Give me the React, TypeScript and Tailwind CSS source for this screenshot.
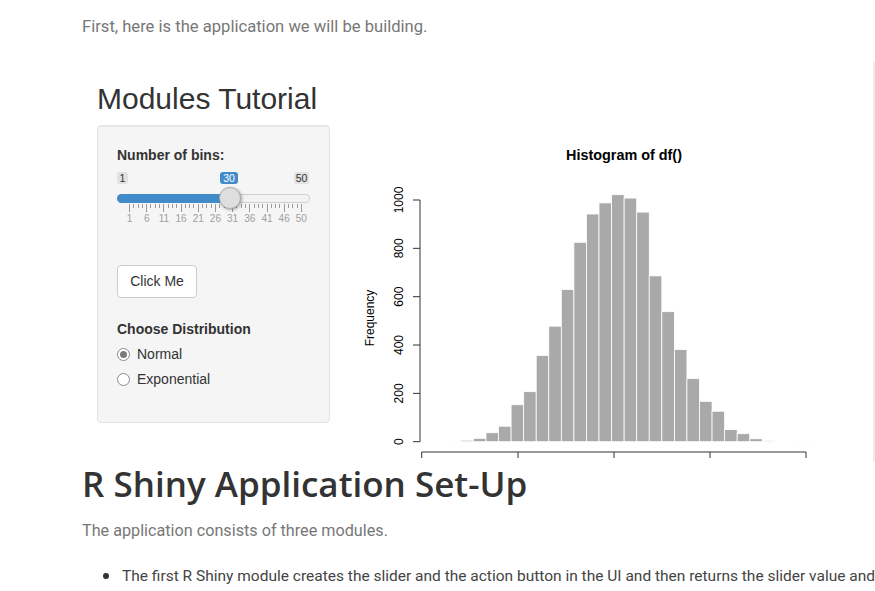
import React from "react";

const counts = [2, 6, 14, 37, 64, 153, 207, 357, 478, 630, 825, 942, 988, 1022, 1008, 950, 686, 538, 381, 261, 167, 126, 50, 33, 12, 4, 0, 1, 1];
const Y0 = 441.7;
const SY = 0.2417;

function Histogram() {
  const yTicks = [0, 200, 400, 600, 800, 1000];
  const xTicks = [421.7, 518, 614, 710, 806];
  return (
    <svg width="528" height="337" viewBox="345 125 528 337" className="ml-[15px] shrink-0" style={{ fontFamily: "'Liberation Sans', Arial, sans-serif" }}>
      <text x="624" y="160" textAnchor="middle" fontSize="14.4" fontWeight="bold" fill="#000">Histogram of df()</text>
      {counts.map((c, i) => {
        const h = Math.max(c * SY, c > 0 ? 0.8 : 0);
        return (
          <rect key={i} x={448.3 + i * 12.56} y={Y0 - h} width={12.56} height={h} fill={c < 3 ? "#d6d6d6" : "#a9a9a9"} stroke="#ffffff" strokeWidth="0.8" />
        );
      })}
      <line x1="420" y1="200" x2="420" y2={Y0} stroke="#333" strokeWidth="1" />
      {yTicks.map((t) => {
        const y = Y0 - t * SY;
        return (
          <g key={t}>
            <line x1="413" y1={y} x2="420" y2={y} stroke="#333" strokeWidth="1" />
            <text x="399" y={y} transform={`rotate(-90 399 ${y})`} textAnchor="middle" dominantBaseline="central" fontSize="12" fill="#000">{t}</text>
          </g>
        );
      })}
      <text x="370" y="318" transform="rotate(-90 370 318)" textAnchor="middle" dominantBaseline="central" fontSize="12" fill="#000">Frequency</text>
      <line x1="421.7" y1="452" x2="806" y2="452" stroke="#333" strokeWidth="1" />
      {xTicks.map((x) => (
        <line key={x} x1={x} y1="452" x2={x} y2="458" stroke="#333" strokeWidth="1" />
      ))}
    </svg>
  );
}

function Slider() {
  const majors = [1, 6, 11, 16, 21, 26, 31, 36, 41, 46, 50];
  return (
    <div className="mt-[5px] h-[60px] pt-[2px]" style={{ fontFamily: "'Liberation Sans', Arial, sans-serif" }}>
      <div className="relative flex justify-between h-[12px] text-[10.5px] leading-[12px] text-[#333]">
        <span className="w-[11px] rounded-[3px] bg-[#e1e1e1] text-center">1</span>
        <span className="w-[15px] mr-px rounded-[3px] bg-[#e1e1e1] text-center">50</span>
        <span className="absolute left-[103px] top-0 w-[18px] h-[12px] rounded-[3px] bg-[#428bca] text-center text-white">30</span>
      </div>
      <div className="relative mt-[10px] flex h-[9px]">
        <div className="w-[113px] rounded-l-full bg-[#428bca]" />
        <div className="flex-1 rounded-r-full bg-[#f2f2f2] border border-[#cfcfcf] border-l-0" />
        <div className="absolute left-[102px] -top-[7px] w-[22px] h-[22px] rounded-full bg-[#dedede] border border-[#ababab] shadow-[1px_1px_3px_rgba(0,0,0,0.3)]" />
      </div>
      <div className="mt-[1px] flex pl-[12px] h-[8px] items-start">
        {Array.from({ length: 10 }).map((_, k) => (
          <div key={k} className="flex w-[17.2px] shrink-0 items-start">
            <div className="w-[4.3px] h-[8px] border-l border-[#999] shrink-0" />
            <div className="w-[4.3px] h-[4px] border-l border-[#999] shrink-0" />
            <div className="w-[4.3px] h-[4px] border-l border-[#999] shrink-0" />
            <div className="w-[4.3px] h-[4px] border-l border-[#999] shrink-0" />
          </div>
        ))}
        <div className="w-px h-[8px] bg-[#999] shrink-0" />
      </div>
      <div className="mt-[1px] ml-[3.9px] flex text-[10px] leading-[12px] text-[#a0a0a0]">
        {majors.map((v) => (
          <span key={v} className="w-[17.2px] shrink-0 text-center">{v}</span>
        ))}
      </div>
    </div>
  );
}

function Radio({ checked, label }: { checked?: boolean; label: string }) {
  return (
    <div className="flex items-center h-[20px] mt-[5px]">
      <div className="w-[13px] h-[13px] rounded-full border border-[#8a8a8a] bg-white flex items-center justify-center">
        {checked && <div className="w-[7px] h-[7px] rounded-full bg-[#7a7a7a]" />}
      </div>
      <span className="ml-[7px] text-[14px] text-[#333]">{label}</span>
    </div>
  );
}

export default function App() {
  const body = { fontFamily: "Roboto, 'Noto Sans', sans-serif" };
  return (
    <div className="w-[875px] h-[591px] overflow-hidden bg-white">
      <div className="pl-[82px]">
        <p className="mt-[14px] h-[26px] leading-[26px] text-[16.6px] text-[#777]" style={body}>
          First, here is the application we will be building.
        </p>
        <div className="mt-[22px] h-[400px] w-[793px] border-r-2 border-[#ececec] overflow-hidden pl-[15px] pt-[20px]" style={{ fontFamily: "'Liberation Sans', Arial, sans-serif" }}>
          <h2 className="h-[33px] leading-[33px] text-[30px] text-[#333] mb-[10px]">Modules Tutorial</h2>
          <div className="flex items-start">
            <div className="w-[233px] shrink-0 bg-[#f5f5f5] border border-[#e3e3e3] rounded-[4px] pt-[19px] px-[19px] pb-[33px] shadow-[inset_0_1px_1px_rgba(0,0,0,0.05)]">
              <div className="h-[20px] leading-[20px] text-[14px] font-bold text-[#333]">Number of bins:</div>
              <Slider />
              <button className="mt-[35px] h-[33px] w-[80px] bg-white border border-[#ccc] rounded-[4px] text-[14px] text-[#333]">Click Me</button>
              <div className="mt-[21px] h-[20px] leading-[20px] text-[14px] font-bold text-[#333]">Choose Distribution</div>
              <Radio checked label="Normal" />
              <Radio label="Exponential" />
            </div>
            <Histogram />
          </div>
        </div>
        <h1 className="h-[44px] leading-[44px] text-[35px] font-semibold text-[#333]" style={{ fontFamily: "'Open Sans', sans-serif" }}>
          R Shiny Application Set-Up
        </h1>
        <p className="mt-[12px] h-[26px] leading-[26px] text-[16.2px] text-[#777]" style={body}>
          The application consists of three modules.
        </p>
        <ul className="mt-[19px] text-[15.5px] text-[#444] whitespace-nowrap" style={body}>
          <li className="flex items-center h-[26px] leading-[26px]">
            <span className="ml-[21px] w-[6px] h-[6px] rounded-full bg-[#333] shrink-0" />
            <span className="ml-[13px]">The first R Shiny module creates the slider and the action button in the UI and then returns the slider value and</span>
          </li>
        </ul>
      </div>
    </div>
  );
}
